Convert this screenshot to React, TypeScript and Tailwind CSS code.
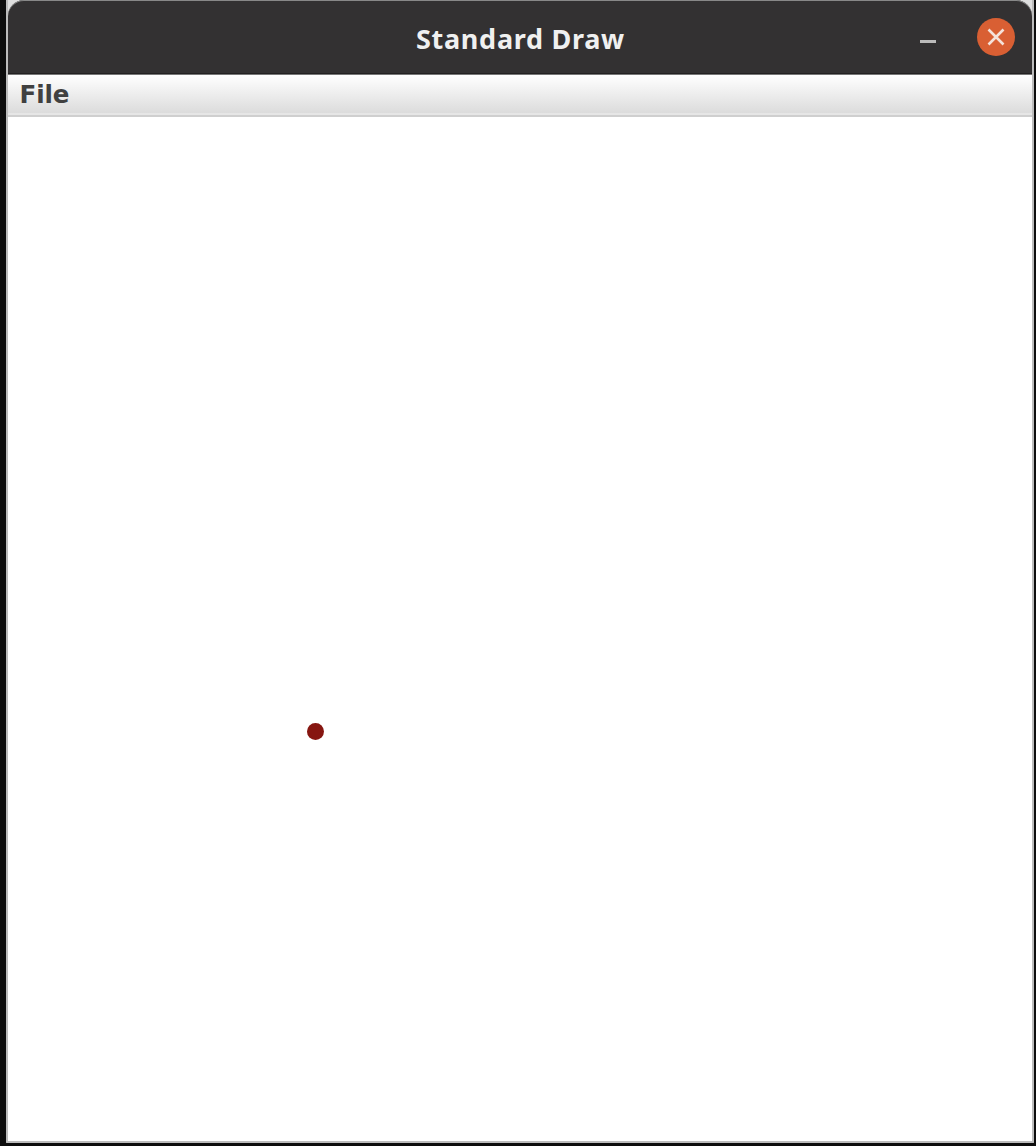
function TitleBar() {
  return (
    <header className="grid h-[75px] shrink-0 grid-cols-[1fr_auto_1fr] rounded-t-[16px] border-b border-[#777] bg-[#333132] pt-[2px] shadow-[inset_0_1px_0_#888,inset_0_-1px_0_#232122]">
      <span />
      <h1 className="w-[208px] pt-[18px] font-['Noto_Sans',sans-serif] text-[27px] leading-[37px] font-bold tracking-[0.7px] whitespace-nowrap text-[#f0f0f0]">
        Standard Draw
      </h1>
      <div className="flex items-start justify-end pr-[17px]">
        <button aria-label="Minimize" className="mt-[38px] mr-[41px] h-[3px] w-4 bg-[#bcbbbb]" />
        <button aria-label="Close" className="mt-[16px] size-[38px] rounded-full bg-[#d95f33]">
          <svg className="size-[38px]" viewBox="0 0 38 38" fill="none" stroke="#f5e2da" strokeWidth="2.6">
            <path d="M11.5 11.5 26.5 26.5M26.5 11.5 11.5 26.5" />
          </svg>
        </button>
      </div>
    </header>
  );
}

function MenuBar() {
  return (
    <nav className="h-[42px] shrink-0 border-b-2 border-[#cfcfcf] bg-linear-to-b from-white to-[#dadada] pl-[11.5px] shadow-[inset_0_-2px_0_#e6e6e6]">
      <button className="block pt-[5px] font-['DejaVu_Sans',sans-serif] text-[24.5px] leading-[30px] font-bold tracking-[-0.1px] text-[#404040]">
        File
      </button>
    </nav>
  );
}

export default function App() {
  return (
    <div className="h-[1146px] w-[1036px] bg-[#0d0d0d] pr-[2px] pb-[3px] pl-[6px]">
      <div className="flex h-full flex-col rounded-b-[1px] border-x-2 border-b-2 border-[#bcbcbc] bg-[#dedede]">
        <TitleBar />
        <MenuBar />
        <main className="relative grow bg-white">
          <span className="absolute top-[606px] left-[298.5px] size-[17px] rounded-full bg-[#861610]" />
        </main>
      </div>
    </div>
  );
}
